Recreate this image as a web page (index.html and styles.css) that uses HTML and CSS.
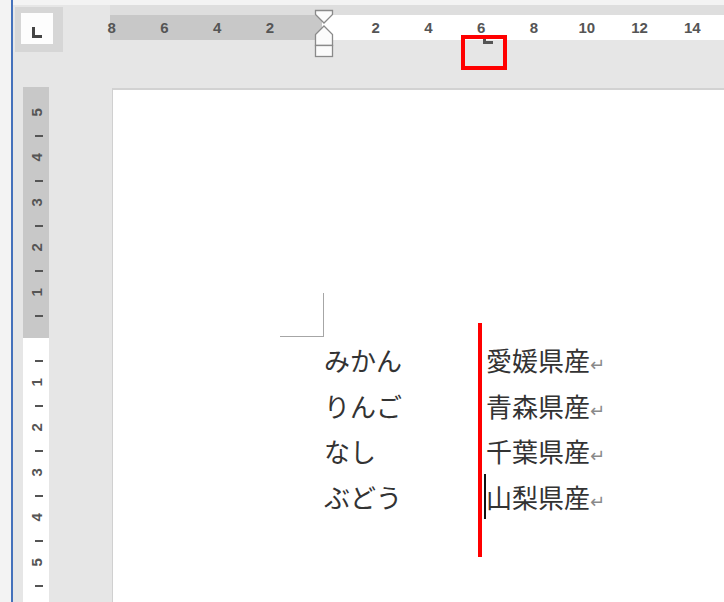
FILE: index.html
```html
<!DOCTYPE html>
<html lang="ja">
<head>
<meta charset="utf-8">
<title>Word ruler tab</title>
<link rel="stylesheet" href="styles.css">
</head>
<body>
<div class="app">
  <div class="edge"></div>
  <div class="blue"></div>
  <div class="main">
    <div class="topstrip"></div>
    <div class="header">
      <div class="tabsel"><div class="tabsel-inner"><span class="tab-l"></span></div></div>
      <div class="hruler">
        <div class="hscale">
          <span>8</span><span>6</span><span>4</span><span>2</span><span></span><span>2</span><span>4</span><span>6</span><span>8</span><span>10</span><span>12</span><span>14</span>
        </div>
        <svg class="indent" width="22" height="50" viewBox="0 0 22 50">
          <polygon points="2.5,1.5 19.5,1.5 19.5,5.5 11,14 2.5,5.5" />
          <polygon points="11,17 19.5,25.5 19.5,36.5 2.5,36.5 2.5,25.5" />
          <rect x="2.5" y="36.5" width="17" height="11" />
        </svg>
        <span class="tabstop"></span>
      </div>
    </div>
    <div class="body">
      <div class="vruler">
        <span class="vn">5</span><span class="vt"></span>
        <span class="vn">4</span><span class="vt"></span>
        <span class="vn">3</span><span class="vt"></span>
        <span class="vn">2</span><span class="vt"></span>
        <span class="vn">1</span><span class="vt"></span>
        <span class="vn"></span><span class="vt"></span>
        <span class="vn">1</span><span class="vt"></span>
        <span class="vn">2</span><span class="vt"></span>
        <span class="vn">3</span><span class="vt"></span>
        <span class="vn">4</span><span class="vt"></span>
        <span class="vn">5</span><span class="vt"></span>
      </div>
      <div class="page">
        <div class="corner"></div>
        <div class="row"><span>みかん</span><span>愛媛県産<span class="ret">↵</span></span></div>
        <div class="row"><span>りんご</span><span>青森県産<span class="ret">↵</span></span></div>
        <div class="row"><span>なし</span><span>千葉県産<span class="ret">↵</span></span></div>
        <div class="row"><span>ぶどう</span><span><span class="caret"></span>山梨県産<span class="ret">↵</span></span></div>
        <div class="redline"></div>
      </div>
    </div>
  </div>
  <div class="redbox"></div>
</div>
</body>
</html>
```

FILE: styles.css
```css
* { box-sizing: border-box; }
html, body { margin: 0; padding: 0; }
body {
  width: 724px;
  height: 602px;
  overflow: hidden;
  background: #e6e6e6;
  font-family: "Liberation Sans", Arial, sans-serif;
}
.app {
  position: relative;
  display: flex;
  width: 724px;
  height: 602px;
}
.edge { width: 11px; background: #f3f3f3; flex: none; }
.blue { width: 2px; background: #4471bb; flex: none; }
.main {
  flex: 1;
  display: flex;
  flex-direction: column;
  min-width: 0;
  background: #e6e6e6;
}
.topstrip {
  height: 5px;
  background: #f3f3f3;
  flex: none;
}
.header {
  height: 82px;
  display: flex;
  align-items: flex-start;
  flex: none;
}
.tabsel {
  margin: 2px 0 0 2px;
  width: 48px;
  height: 45px;
  background: #d6d6d6;
  padding: 6px 0 0 6px;
  flex: none;
}
.tabsel-inner {
  width: 32px;
  height: 31px;
  background: #fdfdfd;
  padding: 14px 0 0 11px;
}
.tab-l {
  display: block;
  width: 10px;
  height: 11px;
  border-left: 3px solid #444;
  border-bottom: 3px solid #444;
}
.hruler {
  position: relative;
  margin-left: 47px;
  flex: 1;
  height: 35px;
  border-top: 10px solid #dedede;
  background: linear-gradient(to right, #c8c8c8 0 212px, #ffffff 212px);
}
.hscale {
  display: flex;
  margin-left: -24.8px;
  height: 25px;
}
.hscale span {
  flex: none;
  width: 52.8px;
  text-align: center;
  line-height: 25px;
  font-size: 15px;
  font-weight: bold;
  color: #555555;
}
.indent {
  position: absolute;
  left: 203px;
  top: -6px;
}
.indent polygon, .indent rect {
  fill: #fbfbfb;
  stroke: #8a8a8a;
  stroke-width: 1.3;
}
.tabstop {
  position: absolute;
  left: 373px;
  top: 20px;
  width: 10px;
  height: 9px;
  border-left: 3px solid #555;
  border-bottom: 3px solid #555;
}
.body {
  flex: 1;
  display: flex;
  align-items: stretch;
  min-height: 0;
}
.vruler {
  margin-left: 10px;
  width: 26px;
  flex: none;
  display: flex;
  flex-direction: column;
  padding-top: 14.75px;
  background: linear-gradient(to bottom, #c8c8c8 0 251px, #ffffff 251px);
}
.vn, .vt {
  height: 22.5px;
  flex: none;
  display: flex;
  align-items: center;
  justify-content: center;
  font-size: 15px;
  font-weight: bold;
  color: #555555;
  padding-left: 2px;
}
.vn { transform: rotate(-90deg); }
.vt::before {
  content: "";
  display: block;
  width: 8px;
  height: 2px;
  background: #555;
  margin-left: 3px;
}
.page {
  position: relative;
  margin-left: 63px;
  margin-top: 1px;
  flex: 1;
  background: #ffffff;
  border-top: 2px solid #d2d2d2;
  border-left: 1px solid #d0d0d0;
  padding: 203px 0 0 211px;
  font-family: "Noto Sans CJK JP", sans-serif;
  font-size: 26px;
  color: #333333;
}
.corner {
  margin-left: -44px;
  width: 44px;
  height: 44px;
  border-right: 1px solid #a6a6a6;
  border-bottom: 1px solid #a6a6a6;
}
.row {
  display: grid;
  grid-template-columns: 162px auto;
  line-height: 45.5px;
  height: 45.5px;
  white-space: nowrap;
}
.ret {
  font-family: "DejaVu Sans", sans-serif;
  font-size: 18px;
  color: #8a8a8a;
}
.caret {
  display: inline-block;
  width: 2px;
  height: 45px;
  background: #111;
  margin-left: -2px;
  vertical-align: top;
}
.redline {
  position: absolute;
  left: 365px;
  top: 233px;
  width: 4px;
  height: 234px;
  background: #ff0000;
}
.redbox {
  position: absolute;
  left: 461px;
  top: 35px;
  width: 46px;
  height: 35px;
  border: 4px solid #ff0000;
}
```
